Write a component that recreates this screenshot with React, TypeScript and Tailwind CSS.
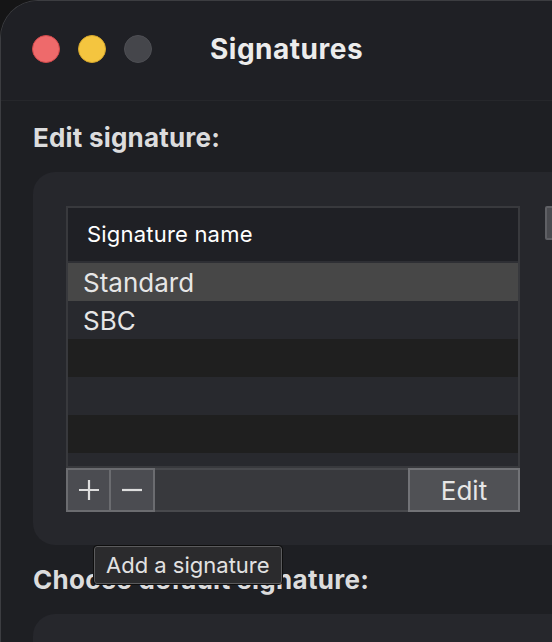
import React from 'react';

const font = { fontFamily: 'Inter, "Noto Sans", sans-serif' };

const rows = [
  { name: 'Standard', cls: 'bg-[#474747]' },
  { name: 'SBC', cls: 'bg-[#28292e]' },
  { name: '', cls: 'bg-[#1f1f1f]' },
  { name: '', cls: 'bg-[#28292e]' },
  { name: '', cls: 'bg-[#1f1f1f]' },
];

const App: React.FC = () => {
  return (
    <div className="w-[552px] h-[642px] bg-[#151516] overflow-hidden" style={font}>
      <div className="relative w-[560px] h-[642px] bg-[#1e1f23] rounded-tl-[38px] border-l border-t border-[#3c3d41] overflow-hidden">
        {/* title bar */}
        <div className="h-[100px] bg-[#1f2025] border-b border-[#26272b] flex items-center pl-[31px] pb-[4px]">
          <div className="flex gap-[18px]">
            <span className="w-[28px] h-[28px] rounded-full bg-[#ee6a6b] border border-[#d0494b]"></span>
            <span className="w-[28px] h-[28px] rounded-full bg-[#f4c53f] border border-[#d6a72c]"></span>
            <span className="w-[28px] h-[28px] rounded-full bg-[#45464b] border border-[#4e4f54]"></span>
          </div>
          <h1 className="ml-[58px] text-[28px] font-bold text-[#ececec] tracking-[0.5px]">Signatures</h1>
        </div>

        <div className="pl-[32px]">
          <h2 className="mt-[22px] text-[26px] leading-[30px] font-bold text-[#dcdcdd] tracking-[0.2px]">Edit signature:</h2>

          {/* edit panel */}
          <div className="mt-[19px] w-[560px] h-[373px] bg-[#26272c] rounded-[22px] pl-[33px] pt-[34px] relative">
            <div className="w-[454px]">
              <div className="border-2 border-[#38393d] bg-[#28292e]">
                <div className="h-[55px] bg-[#1f2025] flex items-center pl-[19px] border-b-2 border-[#2e2f34]">
                  <span className="text-[22px] text-white tracking-[0.2px]">Signature name</span>
                </div>
                {rows.map((r, i) => (
                  <div key={i} className={`h-[38px] flex items-center pl-[15px] ${r.cls}`}>
                    <span className="text-[26px] text-[#e6e6e6]">{r.name}</span>
                  </div>
                ))}
                <div className="h-[13px] bg-[#28292e]"></div>
              </div>
              <div className="flex h-[44px]">
                <div className="w-[45px] bg-[#4b4c51] border-2 border-[#6b6c70] flex items-center justify-center">
                  <svg width="24" height="24" viewBox="0 0 24 24">
                    <path d="M12 2v20M2 12h20" stroke="#dedede" strokeWidth="2.2" />
                  </svg>
                </div>
                <div className="w-[46px] -ml-[2px] bg-[#4b4c51] border-2 border-[#6b6c70] flex items-center justify-center">
                  <svg width="22" height="22" viewBox="0 0 22 22">
                    <path d="M1 11h20" stroke="#dedede" strokeWidth="2.2" />
                  </svg>
                </div>
                <div className="flex-1 bg-[#38393d] border-y-2 border-[#48494d]"></div>
                <div className="w-[112px] bg-[#505155] border-2 border-[#727377] flex items-center justify-center">
                  <span className="text-[26px] text-[#e6e6e6]">Edit</span>
                </div>
              </div>
            </div>
            <div className="absolute left-[512px] top-[34px] w-[20px] h-[34px] bg-[#4a4b50] border-2 border-[#5f6065] rounded-[2px]"></div>
          </div>

          <h2 className="mt-[20px] text-[26px] leading-[30px] font-bold text-[#dcdcdd] tracking-[0.3px]">Choose default signature:</h2>

          <div className="mt-[19px] w-[560px] h-[60px] bg-[#26272c] rounded-[22px]"></div>
        </div>

        {/* tooltip */}
        <div className="absolute left-[93px] top-[545px] h-[38px] px-[11px] flex items-center bg-[#2b2b2d] border border-[#5b5b5d] outline outline-1 outline-[#0e0e0e] rounded-[3px]">
          <span className="text-[22px] text-[#e2e2e2]">Add a signature</span>
        </div>
      </div>
    </div>
  );
};

export default App;
